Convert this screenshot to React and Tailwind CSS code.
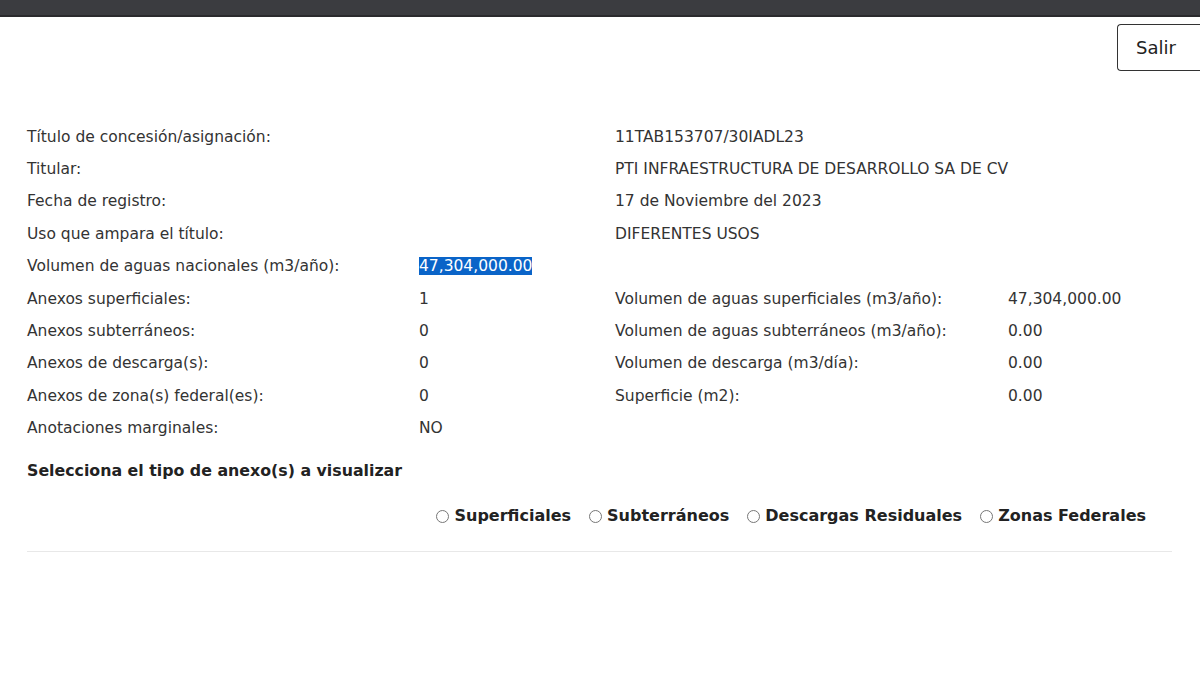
const left = [
  ["Título de concesión/asignación:", null],
  ["Titular:", null],
  ["Fecha de registro:", null],
  ["Uso que ampara el título:", null],
  ["Volumen de aguas nacionales (m3/año):", "47,304,000.00"],
  ["Anexos superficiales:", "1"],
  ["Anexos subterráneos:", "0"],
  ["Anexos de descarga(s):", "0"],
  ["Anexos de zona(s) federal(es):", "0"],
  ["Anotaciones marginales:", "NO"],
]

const right = [
  ["11TAB153707/30IADL23", null],
  ["PTI INFRAESTRUCTURA DE DESARROLLO SA DE CV", null],
  ["17 de Noviembre del 2023", null],
  ["DIFERENTES USOS", null],
  [null, null],
  ["Volumen de aguas superficiales (m3/año):", "47,304,000.00"],
  ["Volumen de aguas subterráneos (m3/año):", "0.00"],
  ["Volumen de descarga (m3/día):", "0.00"],
  ["Superficie (m2):", "0.00"],
  [null, null],
]

const tipos = ["Superficiales", "Subterráneos", "Descargas Residuales", "Zonas Federales"]

export default function App() {
  return (
    <div className="w-[1200px] h-[675px] overflow-hidden bg-white text-[#333]" style={{ fontFamily: "'DejaVu Sans', sans-serif" }}>
      <div className="h-[17px] bg-[#3b3c40] border-b-2 border-[#2a2a2d]" />

      <div className="flex justify-end pt-[7px]">
        <button className="h-[47px] w-[83px] border border-[#333] border-r-0 rounded-l-[4px] text-[18px] text-[#222] pr-[6px]">
          Salir
        </button>
      </div>

      <div className="pl-[27px] pr-[28px] pt-[50px] text-[15.5px]">
        {left.map((row, i) => (
          <div key={i} className="grid grid-cols-[392px_196px_393px_1fr] h-[32.4px] items-center whitespace-nowrap">
            <div>{row[0]}</div>
            <div>
              {row[1] && (i === 4 ? <span className="bg-[#0a64c8] text-white">{row[1]}</span> : row[1])}
            </div>
            <div>{right[i][0]}</div>
            <div>{right[i][1]}</div>
          </div>
        ))}

        <h3 className="mt-[14px] text-[15.8px] font-semibold text-[#222]">
          Selecciona el tipo de anexo(s) a visualizar
        </h3>

        <div className="flex justify-end pr-[26px] mt-[21px] gap-[18px] text-[16px] font-semibold text-[#222]">
          {tipos.map((t) => (
            <label key={t} className="flex items-center gap-[5px]">
              <span className="w-[13px] h-[13px] rounded-full border border-[#777] bg-white mt-[2px]" />
              {t}
            </label>
          ))}
        </div>

        <div className="mt-[23px] border-t border-[#e8e8e8]" />
      </div>
    </div>
  )
}
